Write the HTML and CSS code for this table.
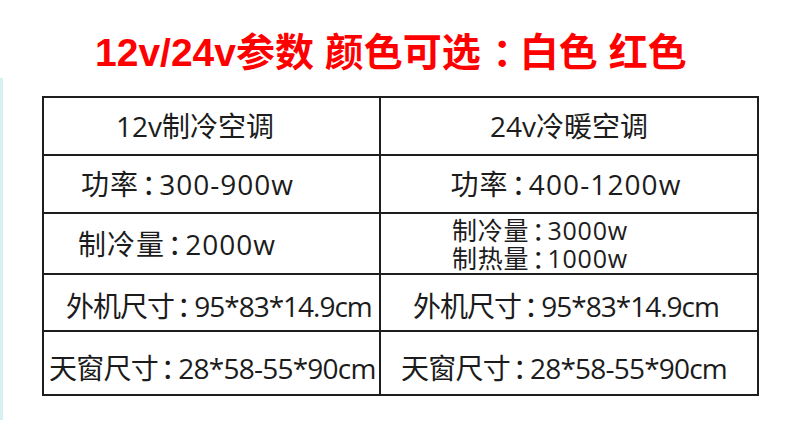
FILE: index.html
```html
<!DOCTYPE html>
<html lang="zh-CN">
<head>
<meta charset="utf-8">
<title>12v/24v参数</title>
<link rel="stylesheet" href="styles.css">
</head>
<body>
<div class="title">12v/24v参数 颜色可选<span class="tcolon">：</span>白色 红色</div>
<div class="sheet">
  <table class="spec">
    <colgroup><col class="col-a"><col class="col-b"></colgroup>
    <tr class="r1">
      <td class="l1">12v制冷空调</td>
      <td class="c-right">24v冷暖空调</td>
    </tr>
    <tr class="r2">
      <td class="l2">功率<span class="colon">：</span>300-900w</td>
      <td class="c-right w2">功率<span class="colon">：</span>400-1200w</td>
    </tr>
    <tr class="r3">
      <td class="l3">制冷量<span class="colon">：</span>2000w</td>
      <td class="two"><div class="ln">制冷量<span class="colon">：</span>3000w</div><div class="ln">制热量<span class="colon">：</span>1000w</div></td>
    </tr>
    <tr class="r4">
      <td class="l4">外机尺寸<span class="colon">：</span>95*83*14.9cm</td>
      <td class="c-right w4">外机尺寸<span class="colon">：</span>95*83*14.9cm</td>
    </tr>
    <tr class="r5">
      <td class="l5">天窗尺寸<span class="colon">：</span>28*58-55*90cm</td>
      <td class="c-right w5">天窗尺寸<span class="colon">：</span>28*58-55*90cm</td>
    </tr>
  </table>
</div>
</body>
</html>
```
FILE: styles.css
```css
html, body {
  margin: 0;
  padding: 0;
  background: #ffffff;
}
body {
  width: 800px;
  height: 425px;
  overflow: hidden;
}
.title {
  height: 78px;
  box-sizing: border-box;
  padding: 34px 0 0 95px;
  font-family: "Liberation Sans", "Noto Sans CJK SC", sans-serif;
  font-weight: bold;
  font-size: 39px;
  line-height: 38px;
  color: #ff0000;
  white-space: nowrap;
}
.tcolon {
  padding-left: 0.3em;
  letter-spacing: -0.3em;
}
.colon {
  padding-left: 0.1em;
  letter-spacing: -0.38em;
}
.sheet {
  height: 342px;
  box-sizing: border-box;
  border-left: 3px solid #d6f1f2;
  padding: 18px 0 0 39px;
}
.spec {
  border-collapse: collapse;
  width: 717px;
  table-layout: fixed;
  font-family: "Open Sans", "Noto Sans CJK SC", sans-serif;
  font-size: 28px;
  color: #1c1c1c;
}
.col-a { width: 337px; }
.spec td {
  border: 2px solid #1e1e1e;
  padding: 0;
  white-space: nowrap;
  vertical-align: middle;
  line-height: 30px;
  text-align: left;
  box-sizing: border-box;
}
.spec .c-right {
  text-align: center;
}
.spec .r1 td { height: 58px; }
.spec .r2 td { height: 58px; }
.spec .r3 td { height: 61px; }
.spec .r4 td { height: 57px; padding-top: 6px; }
.spec .r5 td { height: 64px; padding-top: 10px; }
.spec .l1 { padding-left: 72px; }
.spec .l2 { padding-left: 37px; letter-spacing: 1px; }
.spec .l3 { padding-left: 34px; letter-spacing: 1px; }
.spec .l4 { padding-left: 22px; letter-spacing: -1px; }
.spec .l5 { padding-left: 5px; letter-spacing: -0.75px; }
.spec .w2 { letter-spacing: 1.1px; padding-right: 6px; }
.spec .w4 { letter-spacing: -1px; padding-right: 6px; }
.spec .w5 { letter-spacing: -0.8px; padding-right: 10px; }
.spec .two {
  padding-left: 71px;
  font-size: 25px;
  letter-spacing: 0.8px;
}
.spec .two .ln {
  height: 28px;
  line-height: 28px;
}
```
